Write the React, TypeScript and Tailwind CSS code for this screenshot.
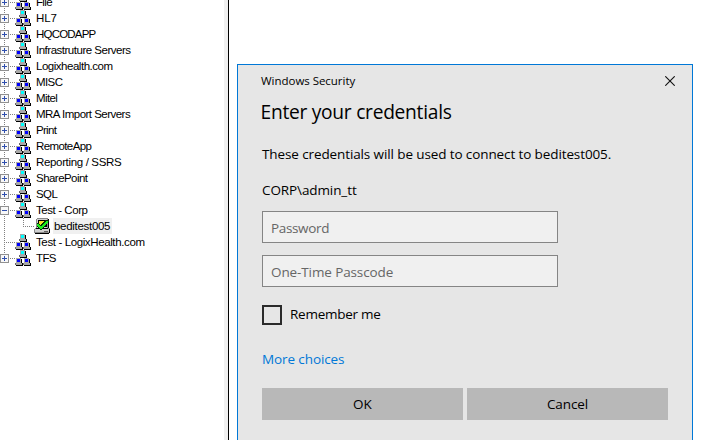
type Item = { label: string; track: string; toggle: "plus" | "minus" | "none" };

const groups: Item[] = [
  { label: "File", track: "tracking-[-0.65px]", toggle: "plus" },
  { label: "HL7", track: "tracking-[-0.1px]", toggle: "plus" },
  { label: "HQCODAPP", track: "tracking-[-0.8px]", toggle: "plus" },
  { label: "Infrastruture Servers", track: "tracking-[-0.49px]", toggle: "plus" },
  { label: "Logixhealth.com", track: "tracking-[-0.48px]", toggle: "plus" },
  { label: "MISC", track: "tracking-[-0.6px]", toggle: "plus" },
  { label: "Mitel", track: "tracking-[-0.6px]", toggle: "plus" },
  { label: "MRA Import Servers", track: "tracking-[-0.52px]", toggle: "plus" },
  { label: "Print", track: "tracking-[-0.7px]", toggle: "plus" },
  { label: "RemoteApp", track: "tracking-[-0.6px]", toggle: "plus" },
  { label: "Reporting / SSRS", track: "tracking-[-0.34px]", toggle: "plus" },
  { label: "SharePoint", track: "tracking-[-0.54px]", toggle: "plus" },
  { label: "SQL", track: "tracking-[-0.55px]", toggle: "plus" },
  { label: "Test - Corp", track: "tracking-[-0.43px]", toggle: "minus" },
];

const tail: Item[] = [
  { label: "Test - LogixHealth.com", track: "tracking-[-0.38px]", toggle: "none" },
  { label: "TFS", track: "tracking-[-0.6px]", toggle: "plus" },
];

function Gutter({ toggle, last }: { toggle: Item["toggle"]; last?: boolean }) {
  return (
    <svg width="15" height="16" viewBox="0 0 15 16" shapeRendering="crispEdges" className="shrink-0">
      <path d={last ? "M4.5 0V8" : "M4.5 0V16"} stroke="#808080" strokeDasharray="1 1" />
      <path d={toggle === "none" ? "M4 8.5H15" : "M10 8.5H15"} stroke="#808080" strokeDasharray="1 1" />
      {toggle !== "none" && (
        <>
          <rect x="0.5" y="4.5" width="8" height="8" fill="#f8f8f8" stroke="#919191" />
          <path d="M2 8.5H7" stroke="#2f4fae" />
          {toggle === "plus" && <path d="M4.5 6V11" stroke="#2f4fae" />}
        </>
      )}
    </svg>
  );
}

function Monitor({ x, y, screen }: { x: number; y: number; screen: string }) {
  return (
    <g transform={`translate(${x} ${y})`}>
      <path d="M1 0H6V1H7V5H8V8H1V7H0V5H1Z" fill="#000" />
      <path d="M1 0H6V5H1Z" fill="#a8a8a8" />
      <path d="M0 5H7V7H0Z" fill="#a8a8a8" />
      <path d="M0 5H1V7H0Z" fill="#686868" />
      <path d="M2 1H5V4H2Z" fill={screen} />
    </g>
  );
}

function GroupIcon() {
  return (
    <svg width="16" height="16" viewBox="0 0 16 16" shapeRendering="crispEdges" className="shrink-0">
      <Monitor x={4} y={0} screen="#00ffff" />
      <Monitor x={0} y={8} screen="#0000ff" />
      <Monitor x={8} y={8} screen="#0000ff" />
    </svg>
  );
}

function ConnectedIcon() {
  return (
    <svg width="16" height="16" viewBox="0 0 16 16" shapeRendering="crispEdges" className="shrink-0">
      <path d="M3 0H14V1H15V10H16V15H15V16H1V15H0V11H1V10H2V1H3Z" fill="#8a8a8a" />
      <path d="M14 1H15V10H14ZM15 11H16V15H15ZM1 15H15V16H1ZM2 10H14V11H2Z" fill="#000" />
      <path d="M3 1H13V10H3ZM1 11H15V14H1Z" fill="#d0d0d0" />
      <path d="M4 2H13V9H4Z" fill="#000" />
      <path d="M5 3H10V6H7V7H5Z" fill="#f5e52a" />
      <path d="M10 13H14V14H10Z" fill="#606060" />
      <path d="M3 5H5V6H6V7H7V6H8V5H9V4H10V3H11V2H15V4H14V5H13V6H12V8H11V9H10V10H9V11H8V12H6V11H5V10H4V9H3Z" fill="#063006" />
      <path d="M3 6H5V7H6V8H8V7H9V6H10V5H11V4H12V3H14V5H13V6H12V7H11V8H10V9H9V10H8V11H6V10H5V9H4V8H3Z" fill="#1cf01c" />
    </svg>
  );
}

function Row({ item, last }: { item: Item; last?: boolean }) {
  return (
    <li className="flex h-4 items-center">
      <Gutter toggle={item.toggle} last={last} />
      <GroupIcon />
      <span className={`pl-[5px] ${item.track}`}>{item.label}</span>
    </li>
  );
}

function Tree() {
  return (
    <ul className="-mt-1.5 w-56 shrink-0 whitespace-nowrap font-['Liberation_Sans',Arial,sans-serif] text-[11.5px] leading-4 text-black">
      {groups.map((g) => (
        <Row key={g.label} item={g} />
      ))}
      <li className="flex h-4 items-center">
        <svg width="34" height="16" viewBox="0 0 34 16" shapeRendering="crispEdges" className="shrink-0">
          <path d="M4.5 0V16M23.5 0V8M23 8.5H34" fill="none" stroke="#808080" strokeDasharray="1 1" />
        </svg>
        <ConnectedIcon />
        <span className="ml-[3px] h-4 w-[59px] bg-[#f0f0f0] pl-px tracking-[-0.3px]">beditest005</span>
      </li>
      {tail.map((g, i) => (
        <Row key={g.label} item={g} last={i === tail.length - 1} />
      ))}
    </ul>
  );
}

function Field({ label, track }: { label: string; track: string }) {
  return (
    <input
      placeholder={label}
      className={`block h-8 w-[296px] border border-[#858585] bg-[#f0f0f0] pt-px pr-2 pl-2 outline-none placeholder:text-[#666] placeholder:opacity-100 ${track}`}
    />
  );
}

function Dialog() {
  return (
    <section className="mt-16 ml-2 flex h-[400px] w-[456px] flex-col border border-[#0078d7] bg-[#e6e6e6] px-6 font-['Open_Sans','Noto_Sans',sans-serif] text-[13.5px] leading-5 text-black">
      <header className="flex h-8 items-center justify-between">
        <span className="-ml-px text-[11.5px] tracking-[-0.03px]">Windows Security</span>
        <svg width="10" height="10" viewBox="0 0 10 10" className="-mr-[7px]">
          <path d="M0.3 0.3L9.7 9.7M9.7 0.3L0.3 9.7" stroke="#111" strokeWidth="1.1" />
        </svg>
      </header>
      <h1 className="-ml-[1.5px] mt-px h-7 text-[19.2px] leading-7 tracking-[-0.27px]">Enter your credentials</h1>
      <p className="mt-[18px] tracking-[-0.11px] whitespace-nowrap">
        These credentials will be used to connect to beditest005.
      </p>
      <p className="mt-4 tracking-[-0.1px]">CORP\admin_tt</p>
      <div className="mt-[11px] flex flex-col gap-3">
        <Field label="Password" track="tracking-[-0.35px]" />
        <Field label="One-Time Passcode" track="tracking-[-0.11px]" />
      </div>
      <label className="mt-[18px] flex h-5 items-center">
        <span className="size-5 border-2 border-[#2b2b2b]" />
        <span className="pb-0.5 pl-2 tracking-[-0.25px]">Remember me</span>
      </label>
      <a className="mt-[24px] tracking-[-0.1px] text-[#0078d7]">More choices</a>
      <div className="mt-[19px] grid grid-cols-[201px_201px] gap-1">
        <button className="h-8 bg-[#b8b8b8]">OK</button>
        <button className="h-8 bg-[#b8b8b8] tracking-[-0.1px]">Cancel</button>
      </div>
    </section>
  );
}

export default function App() {
  return (
    <main className="flex h-[440px] w-[718px] overflow-hidden bg-white">
      <Tree />
      <div className="w-1 shrink-0 bg-[#f0f0f0]" />
      <div className="w-px shrink-0 bg-black" />
      <Dialog />
    </main>
  );
}
